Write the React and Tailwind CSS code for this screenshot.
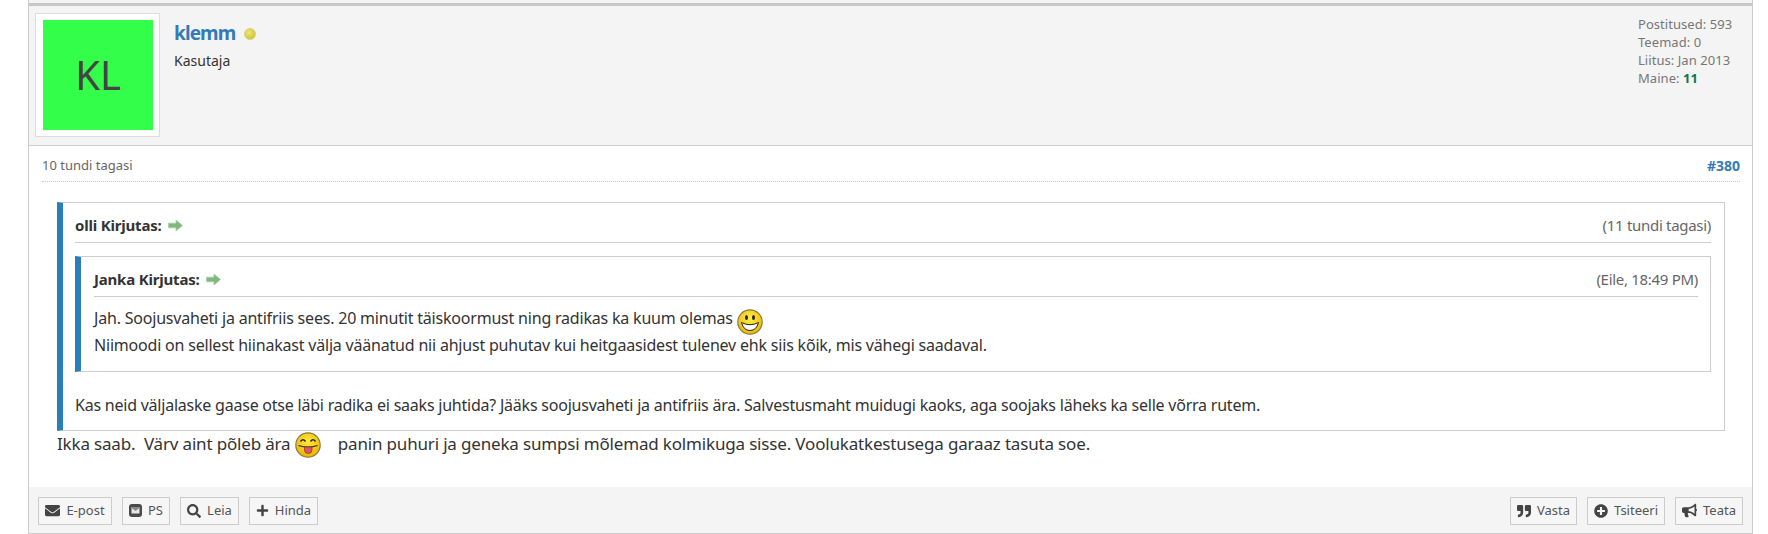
import React from "react";
import { FaEnvelope, FaSearch, FaPlus, FaQuoteRight, FaPlusCircle, FaBullhorn } from "react-icons/fa";

function Arrow() {
  return (
    <svg width="15" height="13" viewBox="0 0 15 13" className="inline-block ml-[6px]">
      <path d="M0.5 4.2 H8 V1 L14.5 6.5 L8 12 V8.8 H0.5 Z" fill="#7fb77f" stroke="#a4cfa4" strokeWidth="0.8" />
    </svg>
  );
}

function PmIcon() {
  return (
    <svg width="13" height="13" viewBox="0 0 13 13" className="shrink-0">
      <rect x="0" y="0" width="13" height="13" rx="3" fill="#4a4a4a" />
      <rect x="2.5" y="3" width="8" height="6.5" fill="#e8e8e8" />
      <path d="M2.5 4 L6.5 7 L10.5 4 V3 H2.5 Z" fill="#8a8a8a" />
    </svg>
  );
}

function Smile() {
  return (
    <svg width="26" height="26" viewBox="0 0 26 26" className="inline-block align-middle translate-y-[2px]">
      <defs>
        <radialGradient id="sg" cx="50%" cy="35%" r="65%">
          <stop offset="0%" stopColor="#ffef4a" />
          <stop offset="100%" stopColor="#eab600" />
        </radialGradient>
      </defs>
      <circle cx="13" cy="13" r="12.2" fill="url(#sg)" stroke="#8b7a45" strokeWidth="1.2" />
      <ellipse cx="9.5" cy="8.5" rx="1.5" ry="2.6" fill="#2b2410" />
      <ellipse cx="16.5" cy="8.5" rx="1.5" ry="2.6" fill="#2b2410" />
      <path d="M4.5 13.5 Q13 18 21.5 13.5 Q19.5 21.5 13 21.5 Q6.5 21.5 4.5 13.5 Z" fill="#fff" stroke="#2b2410" strokeWidth="1" />
    </svg>
  );
}

function Tongue() {
  return (
    <svg width="26" height="26" viewBox="0 0 26 26" className="inline-block align-middle">
      <defs>
        <radialGradient id="tg" cx="50%" cy="35%" r="65%">
          <stop offset="0%" stopColor="#ffe93f" />
          <stop offset="100%" stopColor="#eab300" />
        </radialGradient>
      </defs>
      <circle cx="13" cy="13" r="12.2" fill="url(#tg)" stroke="#8b7a45" strokeWidth="1.2" />
      <path d="M5.5 9.5 Q8 6 10.5 9.5" fill="none" stroke="#2b2410" strokeWidth="1.4" />
      <path d="M15.5 9.5 Q18 6 20.5 9.5" fill="none" stroke="#2b2410" strokeWidth="1.4" />
      <path d="M3.5 13.5 Q13 17 22.5 13.5" fill="none" stroke="#2b2410" strokeWidth="1.3" />
      <path d="M9.5 15 H17 V18 Q17 21.5 13.2 21.5 Q9.5 21.5 9.5 18 Z" fill="#e2555f" stroke="#7b3a2a" strokeWidth="0.7" />
    </svg>
  );
}

function Btn({ icon, label, width }) {
  return (
    <div className={"flex items-center justify-center gap-[6px] h-[28px] border border-[#cccccc] bg-[#f6f6f6] text-[#555555] text-[13px] " + width}>
      <span className="shrink-0 flex items-center text-[#444444]">{icon}</span>
      <span>{label}</span>
    </div>
  );
}

function QuoteHead({ name, time }) {
  return (
    <div className="flex items-center justify-between border-b border-[#cccccc] h-full pt-[5px]">
      <div className="font-bold text-[15px] tracking-[-0.2px] text-[#333333] flex items-center">
        {name} Kirjutas:<Arrow />
      </div>
      <div className="text-[15px] tracking-[-0.3px] text-[#666666]">{time}</div>
    </div>
  );
}

export default function App() {
  return (
    <div className="bg-white h-[534px] pl-[28px] pr-[15px] font-['Noto_Sans','Open_Sans',sans-serif] text-[#333333]">
      <div className="border-x border-b border-[#cccccc] h-[534px] flex flex-col">
        <div className="h-[3px] bg-[#f4f4f4]" />
        <div className="h-[3px] bg-[#c8c8c8]" />
        <div className="h-[140px] shrink-0 bg-[#f4f4f4] border-b border-[#cccccc] flex pl-[6px] pt-[7px]">
          <div className="w-[125px] h-[124px] bg-white border border-[#dddddd] flex items-center pl-[7px]">
            <div className="w-[110px] h-[110px] bg-[#33ff4a] flex items-center justify-center text-[40px] text-[#444444]">KL</div>
          </div>
          <div className="ml-[14px] pt-[7px]">
            <div className="flex items-center h-[26px]">
              <span className="text-[19px] font-bold tracking-[-0.9px] text-[#337ab7] leading-[26px]">klemm</span>
              <span className="ml-[9px] mt-[2px] w-[12px] h-[12px] rounded-full bg-[radial-gradient(circle_at_40%_35%,#eee77a,#c9b820)] border border-[#d8d27a]" />
            </div>
            <div className="text-[14px] leading-[20px] mt-[5px] text-[#333333]">Kasutaja</div>
          </div>
          <div className="ml-auto text-[13px] leading-[18px] tracking-[0.05px] text-[#777777] w-[114px] pt-[2px]">
            <div>Postitused: 593</div>
            <div>Teemad: 0</div>
            <div>Liitus: Jan 2013</div>
            <div>Maine: <b className="text-[#0b7a4b]">11</b></div>
          </div>
        </div>

        <div className="flex-1 pl-[13px] pr-[12px] min-h-0">
          <div className="h-[36px] border-b border-dotted border-[#cccccc] flex items-center justify-between text-[13px] pt-[4px]">
            <span className="text-[#666666]">10 tundi tagasi</span>
            <b className="text-[#337ab7] text-[14px]">#380</b>
          </div>
          <div className="ml-[15px] mr-[15px] mt-[20px] border border-[#cccccc] border-l-[6px] border-l-[#2a7fba] h-[229px] pl-[12px] pr-[13px] flex flex-col">
            <div className="h-[40px] shrink-0">
              <QuoteHead name="olli" time="(11 tundi tagasi)" />
            </div>
            <div className="mt-[13px] border border-[#cccccc] border-l-[6px] border-l-[#2a7fba] h-[116px] pl-[13px] pr-[12px] shrink-0">
              <div className="h-[40px]">
                <QuoteHead name="Janka" time="(Eile, 18:49 PM)" />
              </div>
              <div className="text-[16px] leading-[27px] tracking-[-0.2px] mt-[8px] text-[#333333]">
                <div className="h-[27px] whitespace-nowrap">Jah. Soojusvaheti ja antifriis sees. 20 minutit täiskoormust ning radikas ka kuum olemas <Smile /></div>
                <div className="whitespace-nowrap">Niimoodi on sellest hiinakast välja väänatud nii ahjust puhutav kui heitgaasidest tulenev ehk siis kõik, mis vähegi saadaval.</div>
              </div>
            </div>
            <div className="text-[16px] tracking-[-0.225px] leading-[26px] mt-[20px] whitespace-nowrap">
              Kas neid väljalaske gaase otse läbi radika ei saaks juhtida? Jääks soojusvaheti ja antifriis ära. Salvestusmaht muidugi kaoks, aga soojaks läheks ka selle võrra rutem.
            </div>
          </div>
          <div className="ml-[15px] text-[17px] tracking-[-0.17px] leading-[26px] h-[26px] whitespace-nowrap text-[#333333]">
            Ikka saab.&nbsp; Värv aint põleb ära <Tongue />&nbsp;&nbsp;&nbsp; panin puhuri ja geneka sumpsi mõlemad kolmikuga sisse. Voolukatkestusega garaaz tasuta soe.
          </div>
        </div>

        <div className="h-[46px] shrink-0 bg-[#f4f4f4] flex items-center justify-between pl-[9px] pr-[9px] pt-[1px]">
          <div className="flex gap-[10px]">
            <Btn width="w-[74px]" icon={<FaEnvelope size={15} />} label="E-post" />
            <Btn width="w-[48px]" icon={<PmIcon />} label="PS" />
            <Btn width="w-[59px]" icon={<FaSearch size={14} />} label="Leia" />
            <Btn width="w-[69px]" icon={<FaPlus size={13} />} label="Hinda" />
          </div>
          <div className="flex gap-[10px]">
            <Btn width="w-[67px]" icon={<FaQuoteRight size={14} />} label="Vasta" />
            <Btn width="w-[78px]" icon={<FaPlusCircle size={14} />} label="Tsiteeri" />
            <Btn width="w-[68px]" icon={<FaBullhorn size={15} />} label="Teata" />
          </div>
        </div>
      </div>
    </div>
  );
}
